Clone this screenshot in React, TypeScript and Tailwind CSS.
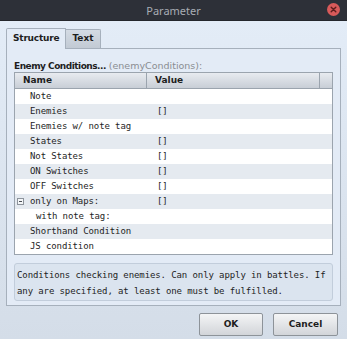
const rows: { name: string; value: string; expand?: boolean; indent?: boolean }[] = [
  { name: "Note", value: "" },
  { name: "Enemies", value: "[]" },
  { name: "Enemies w/ note tag", value: "" },
  { name: "States", value: "[]" },
  { name: "Not States", value: "[]" },
  { name: "ON Switches", value: "[]" },
  { name: "OFF Switches", value: "[]" },
  { name: "only on Maps:", value: "[]", expand: true },
  { name: "with note tag:", value: "", indent: true },
  { name: "Shorthand Condition", value: "" },
  { name: "JS condition", value: "" },
];

export default function App() {
  return (
    <div className="w-[347px] h-[339px] flex flex-col overflow-hidden bg-gradient-to-b from-[#e4edf8] to-[#d4dde8] font-['DejaVu_Sans',sans-serif] text-[#1e1e1e]">
      {/* Title bar */}
      <div className="relative h-[21px] shrink-0 bg-[#2d3038] border-b border-[#24262c] flex items-center justify-center">
        <span className="font-['Noto_Sans',sans-serif] text-[11px] leading-none text-[#a8acb4]">Parameter</span>
        <div className="absolute right-[7px] top-[3px] w-[13px] h-[13px] rounded-full bg-[#d85a5a] flex items-center justify-center">
          <svg width="7" height="7" viewBox="0 0 7 7">
            <path d="M1.2 1.2L5.8 5.8M5.8 1.2L1.2 5.8" stroke="#5c1c1c" strokeWidth="1.4" strokeLinecap="round" />
          </svg>
        </div>
      </div>

      {/* Body */}
      <div className="flex-1 flex flex-col px-[6px] pt-[7px]">
        {/* Tabs */}
        <div className="flex items-start h-[20px]">
          <div className="relative z-10 h-[21px] px-[6px] border border-b-0 border-[#a6b0bc] bg-[#e3ebf6] rounded-tl-[2px] flex items-center text-[9px] font-bold tracking-[-0.2px]">
            Structure
          </div>
          <div className="mt-[1px] h-[19px] px-[6px] border border-l-0 border-b-0 border-[#a6b0bc] rounded-tr-[2px] bg-gradient-to-b from-[#d4dbe4] to-[#c2cad4] flex items-center text-[9px] font-bold">
            Text
          </div>
        </div>

        {/* Panel */}
        <div className="h-[258px] shrink-0 border border-[#a6b0bc] bg-[#e3ebf6] px-[7px] pt-[11px] flex flex-col">
          <div className="text-[9px] leading-[12px] whitespace-nowrap">
            <span className="font-bold tracking-[-0.5px]">Enemy Conditions...</span>{" "}
            <span className="text-[9.5px] text-[#8a8d92]">(enemyConditions):</span>
          </div>

          {/* Table */}
          <div className="border border-[#9ba4ae] bg-white">
            <div className="flex h-[16px] bg-gradient-to-b from-[#e8ebf0] to-[#c8ced6] border-b border-[#9ba4ae] text-[9px] font-bold leading-[15px]">
              <div className="w-[132px] pl-[8px] border-r border-[#9ba4ae]">Name</div>
              <div className="flex-1 pl-[8px] border-r border-[#9ba4ae]">Value</div>
              <div className="w-[12px]" />
            </div>
            {rows.map((r, i) => (
              <div
                key={i}
                className={`flex h-[15px] items-center font-['DejaVu_Sans_Mono',monospace] text-[9px] tracking-[-0.1px] text-[#1e1e1e] ${
                  i % 2 === 1 ? "bg-[#e5eaf0]" : "bg-white"
                }`}
              >
                <div className="w-[132px] flex items-center">
                  {r.expand ? (
                    <div className="ml-[2px] mr-[6px] w-[7px] h-[7px] border border-[#8d949c] bg-[#f4f6f8] flex items-center justify-center">
                      <div className="w-[3px] h-px bg-[#4a4f55]" />
                    </div>
                  ) : (
                    <div className={r.indent ? "w-[21px]" : "w-[15px]"} />
                  )}
                  <span className="whitespace-nowrap">{r.name}</span>
                </div>
                <div className="flex-1 pl-[10px]">{r.value}</div>
              </div>
            ))}
          </div>

          {/* Description */}
          <div className="mt-[8px] h-[38px] border border-[#c2cddb] rounded-[3px] bg-[#dbe4ef] px-[2px] pt-[3px] font-['DejaVu_Sans_Mono',monospace] text-[9px] leading-[16px] tracking-[-0.1px] whitespace-nowrap">
            <div>Conditions checking enemies. Can only apply in battles. If</div>
            <div>any are specified, at least one must be fulfilled.</div>
          </div>
        </div>

        {/* Buttons */}
        <div className="mt-[7px] flex justify-end gap-[10px] pr-[3px]">
          <button className="w-[64px] h-[23px] border border-[#8d9399] rounded-[2px] bg-gradient-to-b from-[#f4f5f6] to-[#d2d5d9] text-[9px] font-bold text-[#1e1e1e]">
            OK
          </button>
          <button className="w-[65px] h-[23px] border border-[#8d9399] rounded-[2px] bg-gradient-to-b from-[#f4f5f6] to-[#d2d5d9] text-[9px] font-bold text-[#1e1e1e]">
            Cancel
          </button>
        </div>
      </div>
    </div>
  );
}
